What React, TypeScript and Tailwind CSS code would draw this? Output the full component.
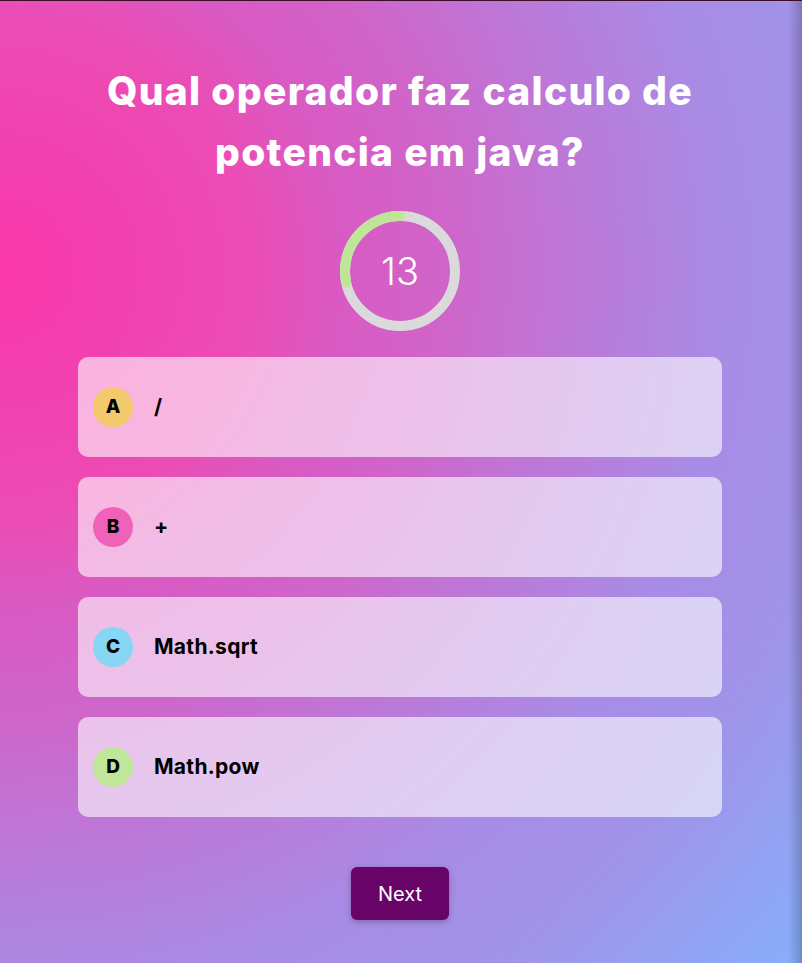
import React from "react";

const options = [
  { letter: "A", text: "/", color: "bg-[#f2c96b]" },
  { letter: "B", text: "+", color: "bg-[#f062b9]" },
  { letter: "C", text: "Math.sqrt", color: "bg-[#87d6f3]" },
  { letter: "D", text: "Math.pow", color: "bg-[#c0e69a]" },
];

function Timer() {
  return (
    <div className="relative flex h-[120px] w-[120px] items-center justify-center">
      <svg className="absolute inset-0" width="120" height="120" viewBox="0 0 120 120">
        <circle cx="60" cy="60" r="55" fill="none" stroke="#dadada" strokeWidth="10" />
        <path
          d="M 60 5 A 55 55 0 0 0 6.2 71.4"
          fill="none"
          stroke="#bfe698"
          strokeWidth="10"
          strokeLinecap="round"
        />
      </svg>
      <span className="relative text-[38px] font-light leading-none text-white">13</span>
    </div>
  );
}

export default function App() {
  return (
    <div className="relative min-h-[963px] w-full overflow-hidden border-t border-[#3b0d27] bg-[radial-gradient(circle_at_0px_270px,#fb38aa_0px,#f240b0_120px,#ec4cb4_250px,#d95ac3_340px,#cf65ca_450px,#c272d3_530px,#a98be5_720px,#a093e8_850px,#86b0fd_1070px)] font-['Inter',sans-serif]">
      <div className="flex w-[800px] flex-col items-center pt-[59px]">
        <h1 className="text-center text-[39px] font-extrabold leading-[61px] tracking-[1.3px] text-white">
          <span className="block">Qual operador faz calculo de</span>
          <span className="block">potencia em java?</span>
        </h1>
        <div className="mt-[29px]">
          <Timer />
        </div>
        <div className="mt-[26px] flex w-[644px] flex-col gap-5">
          {options.map((o) => (
            <div
              key={o.letter}
              className="flex h-[100px] items-center gap-[21px] rounded-[10px] bg-white/60 pl-[15px]"
            >
              <div
                className={`flex h-10 w-10 items-center justify-center rounded-full ${o.color} text-[19px] font-extrabold text-black`}
              >
                {o.letter}
              </div>
              <span className="text-[21px] font-bold tracking-[0.3px] text-black">{o.text}</span>
            </div>
          ))}
        </div>
        <button className="mt-[50px] h-[53px] w-[98px] rounded-[6px] bg-[#680468] text-[20px] text-white shadow-[0_2px_6px_rgba(0,0,0,0.25)]">
          Next
        </button>
      </div>
      <div className="pointer-events-none absolute right-0 top-0 h-full w-[14px] bg-gradient-to-r from-transparent to-black/20" />
    </div>
  );
}
